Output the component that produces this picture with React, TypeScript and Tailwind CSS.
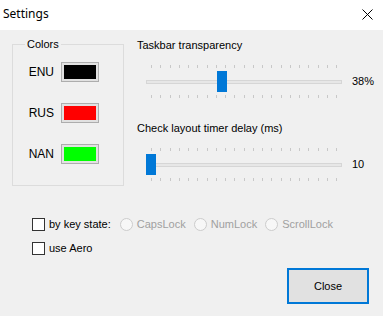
import React from 'react';

const Ticks: React.FC<{ count: number }> = ({ count }) => (
  <div className="flex justify-between px-[5px] h-[3px]">
    {Array.from({ length: count }).map((_, i) => (
      <span key={i} className="w-px h-[3px] bg-[#c8c8c8]" />
    ))}
  </div>
);

const Slider: React.FC<{ value: number; label: string; suffix: string }> = ({ value, label, suffix }) => (
  <div className="flex flex-col">
    <div className="h-[13px] leading-[13px]">{label}</div>
    <div className="flex items-center mt-[13px]">
      <div className="relative w-[196px] ml-[9px] flex flex-col">
        <Ticks count={21} />
        <div className="mt-[12px] h-[4px] border border-[#d6d6d6] bg-[#e7e7e7]" />
        <div className="mt-[11px]">
          <Ticks count={21} />
        </div>
        <div
          className="absolute top-[6px] w-[10px] h-[21px] bg-[#0078d7]"
          style={{ left: `${(value / 100) * 186}px` }}
        />
      </div>
      <div className="ml-[10px] text-[11px]">{suffix}</div>
    </div>
  </div>
);

const Swatch: React.FC<{ label: string; color: string }> = ({ label, color }) => (
  <div className="flex items-center">
    <div className="w-[41px] text-right text-[12px]">{label}</div>
    <div className="ml-[7px] w-[38px] h-[20px] border border-[#adadad] bg-[#e1e1e1] p-[2px]">
      <div className="w-full h-full" style={{ background: color }} />
    </div>
  </div>
);

const Radio: React.FC<{ label: string }> = ({ label }) => (
  <div className="flex items-center">
    <span className="w-[13px] h-[13px] rounded-full border border-[#cccccc] bg-[#f7f7f7]" />
    <span className="ml-[4px] text-[#a0a0a0]">{label}</span>
  </div>
);

const App: React.FC = () => {
  return (
    <div className="w-[383px] h-[316px] bg-[#f0f0f0] text-black text-[11px] font-['Liberation_Sans',Arial,sans-serif] overflow-hidden">
      <div className="h-[30px] bg-white flex items-center justify-between pl-[3px] pr-[10px]">
        <span className="font-['Noto_Sans',sans-serif] text-[12px] -mt-[2px]">Settings</span>
        <svg width="11" height="11" viewBox="0 0 11 11" className="-mt-[1px]">
          <path d="M0.5 0.5 L10.5 10.5 M10.5 0.5 L0.5 10.5" stroke="#000" strokeWidth="1" />
        </svg>
      </div>

      <div className="flex pt-[8px]">
        <fieldset className="ml-[12px] w-[112px] h-[148px] border border-[#dcdcdc] px-0 pt-[11px]">
          <legend className="ml-[12px] px-[2px] leading-[13px] text-[11px]">Colors</legend>
          <div className="flex flex-col gap-[21px]">
            <Swatch label="ENU" color="#000000" />
            <Swatch label="RUS" color="#ff0000" />
            <Swatch label="NAN" color="#00ff00" />
          </div>
        </fieldset>

        <div className="ml-[13px] pt-[1px] flex flex-col gap-[24px]">
          <Slider value={38} label="Taskbar transparency" suffix="38%" />
          <Slider value={0} label="Check layout timer delay (ms)" suffix="10" />
        </div>
      </div>

      <div className="mt-[32px] ml-[32px] flex flex-col gap-[11px] leading-[13px]">
        <div className="flex items-center">
          <span className="w-[13px] h-[13px] border border-[#333333] bg-white" />
          <span className="ml-[4px]">by key state:</span>
          <div className="ml-[9px] flex items-center gap-[8px]">
            <Radio label="CapsLock" />
            <Radio label="NumLock" />
            <Radio label="ScrollLock" />
          </div>
        </div>
        <div className="flex items-center">
          <span className="w-[13px] h-[13px] border border-[#333333] bg-white" />
          <span className="ml-[4px]">use Aero</span>
        </div>
      </div>

      <div className="flex justify-end pr-[14px] mt-[13px]">
        <button className="w-[82px] h-[36px] border-2 border-[#0078d7] bg-[#e1e1e1] text-[11px]">Close</button>
      </div>
    </div>
  );
};

export default App;
